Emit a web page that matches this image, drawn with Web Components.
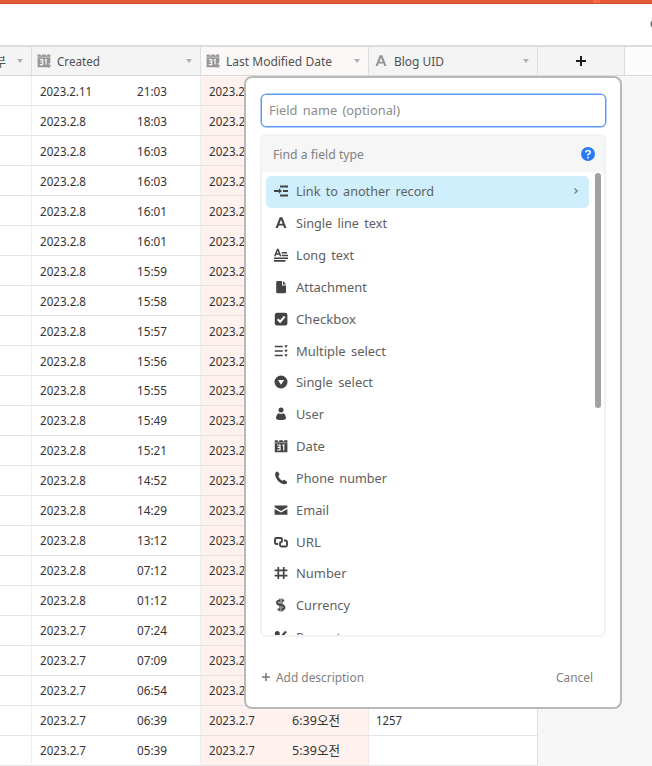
<!DOCTYPE html>
<html lang="en"><head><meta charset="utf-8"><title>Add field</title>
<style>html,body{margin:0;height:766px;overflow:hidden;background:#fff}body{font-family:"Noto Sans","Noto Sans CJK KR",sans-serif;font-size:13px;color:#333}</style></head>
<body><base-app></base-app>
<script>
const mount=(el,html)=>{el.attachShadow({mode:'open'}).innerHTML=html;return el.shadowRoot};

/* A single line of text condensed or widened to the width in its "w" attribute. */
customElements.define('fit-label',class extends HTMLElement{
  connectedCallback(){
    if(this.shadowRoot)return;
    const w=+this.getAttribute('w');
    const r=mount(this,`<style>:host{display:inline-block;flex:none;width:${w}px;height:20px;line-height:20px;white-space:nowrap}span{display:inline-block;transform-origin:0 50%}</style><span><slot></slot></span>`);
    const s=r.querySelector('span');
    s.style.transform=`scaleX(${w/s.getBoundingClientRect().width})`;
  }
});

const ICONS={
link:'<path d="M6 2.5h8M9 7h5M6 11.5h8M0 7h7" stroke-width="1.8"/><path class="f" d="M4.8 4.2 8 7 4.8 9.8z"/>',
text:'<path class="f" d="M5.7 1.3h2.6L12.5 12h-2.3l-.9-2.5H4.7L3.8 12H1.5zM7 3.7 5.4 7.7h3.2z"/>',
long:'<path d="M.8 8.2 3.5 1.6h.5l2.6 6.6M1.9 6h3.8" stroke-width="1.5"/><path d="M7.6 4.7H13M7.8 7.5H14M0 10.2h14M0 12.9h11.5" stroke-width="1.6"/>',
file:'<path class="f" d="M3.5 1H8v4.6h4V12q0 1.3-1.3 1.3H3.5Q2.2 13.3 2.2 12V2.3Q2.2 1 3.5 1zM9 1l3.2 3.5H9z"/>',
check:'<rect class="f" x=".8" y=".8" width="12.6" height="12.6" rx="2.2"/><path d="m3.7 7.2 2.4 2.5 4.6-5.2" stroke="#fff" stroke-width="2"/>',
multi:'<path d="M.8 2.5h8M.8 7h8M.8 11.5h8" stroke-width="1.7"/><path class="f" d="M10.2 1.2h3.6L12 4zM10.2 5.7h3.6L12 8.5zM10.2 10.2h3.6L12 13z"/>',
single:'<circle class="f" cx="7" cy="7" r="6.5"/><path d="M4 5h6L7 9.7z" fill="#fff" stroke="none"/>',
user:'<circle class="f" cx="7" cy="3" r="2.5"/><path class="f" d="M4.3 6.3q2.7 1.5 5.4 0Q12 8 12.1 11q-.2 2-5.1 2t-5.1-2Q2 8 4.3 6.3z"/>',
date:'<path class="f" d="M.8 1.2h3v1.2h1.5V1.2h3.5v1.2h1.4V1.2h3.2v12.1H.8z"/><path d="M.8 3.8h12.6" stroke="#fff" stroke-width=".5"/><path d="M3 6h3v5H3M3.6 8.4H6M8.4 6.6l1.4-.7V11.6" stroke="#fff" stroke-width="1.2"/>',
phone:'<path class="f" d="M2.3.8 4 .7l1.6 3-1.3 1.5q1 2.8 4 4.6l1.8-1.1 3.1 2.1-.3 1.5q-1.2 1.4-3.4.9Q2.4 10.8 1 3.7 1 1.7 2.3.8z"/>',
email:'<path class="f" d="M.6 2.5h12.8v1.7L7 7.9.6 4.2zM.6 6 7 9.5 13.4 6v5.8H.6z"/>',
url:'<path d="M4.2 9H2.5Q1 9 1 7.5v-3Q1 3 2.5 3h4Q8 3 8 4.5V6q0 1.5-1.5 1.5M10 5.5h1.5Q13 5.5 13 7v3q0 1.5-1.5 1.5h-4Q6 11.5 6 10V8.5Q6 7 7.5 7" stroke-width="1.9"/>',
number:'<path d="M4.3 1v12M9.7 1v12M.6 4.4h12.8M.6 9.6h12.8" stroke-width="1.7"/>',
currency:'<path d="M6 2.4Q3 2.6 3 4.6 3 6.4 6 7h1.5q2.9.6 2.9 2.6 0 2-2.9 2.2M3.6 11.6H6M8.2 2.4h2" stroke-width="2"/><path d="M6 .4v13M8 .4v13" stroke-width="1.2"/>',
percent:'<circle class="f" cx="3.3" cy="3.6" r="2.5"/><circle class="f" cx="10.7" cy="10.4" r="2.5"/><path d="M12 1.5 2 12.5" stroke-width="2.2"/>',
stamp:'<path class="f" d="M.6.6h3v.9h1.5V.6h3.6v.9h1.5V.6h3.1V9h-2v4.2H.6z"/><path d="M.6 3.2h12.7" stroke="#f4f4f4" stroke-width=".5"/><path d="M2.8 5.6h2.9v5H2.8M3.3 8h2.4M7.8 6.3l1.3-.7v5" stroke="#f4f4f4" stroke-width="1.2"/><path d="M11.9 9.2v4.8M9.8 11.6h4.2" stroke-width="1.4"/>'
};
customElements.define('field-icon',class extends HTMLElement{
  connectedCallback(){if(!this.shadowRoot)mount(this,`<style>:host{display:block;flex:none;width:14px;height:14px;color:#444}svg{display:block;fill:none;stroke:currentColor}.f{fill:currentColor;stroke:none}</style><svg width="14" height="14" viewBox="0 0 14 14">${ICONS[this.getAttribute('name')]}</svg>`)}
});

customElements.define('top-bar',class extends HTMLElement{
  connectedCallback(){mount(this,`<style>:host{display:block;height:45px;background:#fff}
  .bar{height:3px;background:linear-gradient(90deg,#e25b35 593px,#ff6840 593px 600px,#e25b35 600px);border-bottom:1px solid #cc5030}
  .tool{display:flex;justify-content:flex-end;padding-top:16px}svg{display:block}</style>
  <div class="bar"></div><div class="tool"><svg width="2" height="8"><circle cx="5" cy="4" r="3.8" fill="none" stroke="#666" stroke-width="1.5"/></svg></div>`)}
});

customElements.define('column-head',class extends HTMLElement{
  connectedCallback(){const ic=this.getAttribute('icon');
  mount(this,`<style>:host{display:flex;align-items:center;box-sizing:border-box;height:100%;padding:0 8px 1px 5px;border-right:1px solid #d9dfe1;color:#505050;overflow:hidden}
  field-icon{color:#969696;margin-right:6px}.c{margin-left:auto;margin-top:1px;border:3px solid transparent;border-top:4.5px solid #b0b0b0;border-bottom:0}</style>
  ${ic?`<field-icon name="${ic}"></field-icon>`:''}<slot></slot><i class="c"></i>`)}
});

customElements.define('record-row',class extends HTMLElement{
  connectedCallback(){const [d,t,m,u]=this.getAttribute('data').split('|');
  mount(this,`<style>:host{display:grid;grid-template-columns:32px 168.5px 168px 169px;height:29.97px;width:537.5px;background:#fff;color:#333}
  div{box-sizing:border-box;border-bottom:1.5px solid #e2e4e6;display:flex;align-items:center;padding-left:8px;border-right:1px solid #eceeef}
  .m{background:#fff2ee;border-right-color:#f4e8e4;border-bottom-color:#e6e2e2;padding-left:8px}.l{padding-left:7px;border-right-color:#e0e0e0}
  .t{margin-left:auto;margin-right:33px}.m .t{margin-right:28px}</style>
  <div></div><div><fit-label w="${d.length>8?52:46}">${d}</fit-label><fit-label class="t" w="30">${t}</fit-label></div>
  <div class="m"><fit-label w="${d.length>8?52:46}">${d}</fit-label>${m?`<fit-label class="t" w="48">${m}</fit-label>`:''}</div><div class="l">${u?`<fit-label w="26">${u}</fit-label>`:''}</div>`)}
});

const ROWS=['2023.2.11|21:03','2023.2.8|18:03','2023.2.8|16:03','2023.2.8|16:03','2023.2.8|16:01','2023.2.8|16:01','2023.2.8|15:59','2023.2.8|15:58','2023.2.8|15:57','2023.2.8|15:56','2023.2.8|15:55','2023.2.8|15:49','2023.2.8|15:21','2023.2.8|14:52','2023.2.8|14:29','2023.2.8|13:12','2023.2.8|07:12','2023.2.8|01:12','2023.2.7|07:24','2023.2.7|07:09','2023.2.7|06:54','2023.2.7|06:39|6:39오전|1257','2023.2.7|05:39|5:39오전'];
customElements.define('record-grid',class extends HTMLElement{
  connectedCallback(){mount(this,`<style>:host{display:block;background:#f6f6f6;height:721px;overflow:hidden}
  header{display:grid;grid-template-columns:32px 169px 168px 169px 87px 1fr;height:31.3px;box-sizing:border-box;background:#f4f4f4;border-top:2px solid #dcdcdc;border-bottom:1.5px solid #d6dadb}
  .hot{background:#fcf8f7}.add{display:flex;align-items:center;justify-content:center;border-right:1px solid #d9dfe1}.rest{background:#fcfcfc}
  .first{padding-left:0}.first fit-label{margin-left:-5px}svg{display:block}</style>
  <header><column-head class="first"><fit-label w="11">부</fit-label></column-head>
  <column-head icon="stamp"><fit-label w="43">Created</fit-label></column-head>
  <column-head icon="stamp" class="hot"><fit-label w="106">Last Modified Date</fit-label></column-head>
  <column-head icon="text"><fit-label w="50">Blog UID</fit-label></column-head>
  <div class="add"><svg width="10" height="10"><path d="M5 0v10M0 5h10" stroke="#1c1c1c" stroke-width="2"/></svg></div><div class="rest"></div></header>
  ${ROWS.map(r=>`<record-row data="${r}"></record-row>`).join('')}`)}
});

customElements.define('field-option',class extends HTMLElement{
  connectedCallback(){mount(this,`<style>:host{display:flex;align-items:center;box-sizing:border-box;height:31.83px;width:323px;padding:0 9px 1px 8px;border-radius:5px;color:#606060}
  :host([selected]){background:#d0effd}fit-label{margin-left:8px;word-spacing:2px}svg{margin-left:auto}</style>
  <field-icon name="${this.getAttribute('icon')}"></field-icon><fit-label w="${this.getAttribute('w')}">${this.getAttribute('label')}</fit-label>
  ${this.hasAttribute('selected')?'<svg width="7" height="8"><path d="m1.5 1.5 2.7 2.5-2.7 2.5" fill="none" stroke="#7e8b91" stroke-width="1.5"/></svg>':''}`)}
});

const OPTIONS=[['link','Link to another record',138],['text','Single line text',91],['long','Long text',58],['file','Attachment',71],['check','Checkbox',60],['multi','Multiple select',90],['single','Single select',77],['user','User',28],['date','Date',29],['phone','Phone number',91],['email','Email',33],['url','URL',25],['number','Number',50.5],['currency','Currency',54],['percent','Percent',45]];
customElements.define('field-dialog',class extends HTMLElement{
  connectedCallback(){mount(this,`<style>:host{display:flex;flex-direction:column;box-sizing:border-box;width:378px;height:633px;padding:15px 14px 0;background:#fff;border:2px solid #b9b9b9;border-radius:8px;color:#808080}
  .name{box-sizing:border-box;width:345px;height:33px;margin:.5px .5px 0;border:1px solid #5f9bfa;box-shadow:0 0 0 .5px #5f9bfa;border-radius:5px;padding:5.5px 7.5px;color:#8c8c8c;word-spacing:2px}
  .box{box-sizing:border-box;width:346px;height:503px;margin-top:7.5px;border:2px solid #f2f2f2;border-radius:6px;overflow:hidden;display:flex;flex-direction:column}
  .find{display:flex;justify-content:space-between;align-items:center;flex:none;height:36px;padding:0 9px 0 11px;background:#f6f6f6}
  .body{display:flex;flex:1;min-height:0}.list{flex:1;overflow:hidden;padding:4px 0 0 4px;min-width:0}
  .thumb{width:6px;height:235px;margin:1px 3px 0 0;border-radius:3px;background:#a2a2a2;flex:none}
  .foot{display:flex;align-items:center;justify-content:space-between;padding:30px 13px 0 2px}.foot span{display:flex;align-items:center;gap:6px}svg{display:block}</style>
  <div class="name"><fit-label w="131">Field name (optional)</fit-label></div>
  <div class="box"><div class="find"><fit-label w="91">Find a field type</fit-label><svg width="14" height="14"><circle cx="7" cy="7" r="7" fill="#2a78f6"/><path d="M4.8 5.6Q4.8 3.5 7 3.5t2.2 1.9Q9.2 6.6 7 7.4v1.2M7 9.8v1.6" fill="none" stroke="#fff" stroke-width="1.6"/></svg></div>
  <div class="body"><div class="list">${OPTIONS.map(([i,l,w],n)=>`<field-option icon="${i}" label="${l}" w="${w}" ${n?'':'selected'}></field-option>`).join('')}</div><div class="thumb"></div></div></div>
  <div class="foot"><span><svg width="8" height="8"><path d="M4 0v8M0 4h8" stroke="#777" stroke-width="1.5"/></svg><fit-label w="88">Add description</fit-label></span><fit-label w="37">Cancel</fit-label></div>`)}
});

customElements.define('base-app',class extends HTMLElement{
  connectedCallback(){mount(this,`<style>:host{display:block;position:relative;height:766px;overflow:hidden}field-dialog{position:absolute;left:244px;top:76px}</style>
  <top-bar></top-bar><record-grid></record-grid><field-dialog></field-dialog>`)}
});
</script></body></html>
